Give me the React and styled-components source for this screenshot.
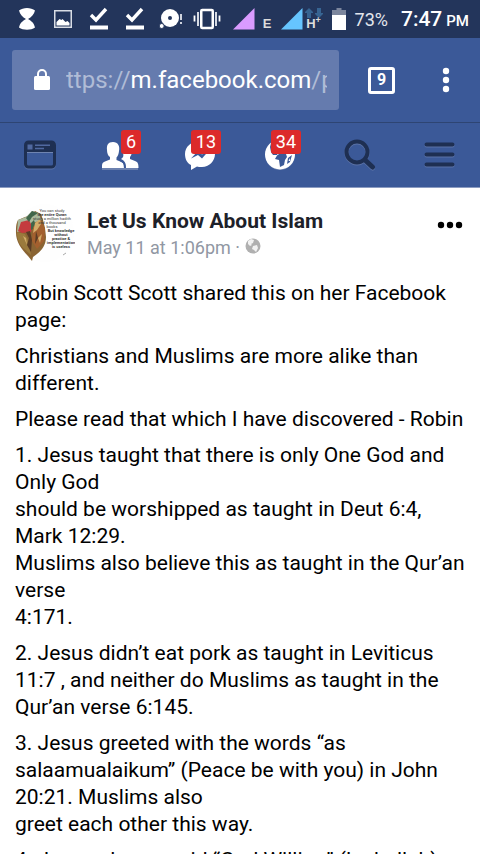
import React from "react";
import styled, { createGlobalStyle } from "styled-components";

const GlobalStyle = createGlobalStyle`
  * {
    box-sizing: border-box;
  }
  body {
    margin: 0;
    background: #fff;
    font-family: Roboto, "Liberation Sans", sans-serif;
  }
  button {
    border: none;
    padding: 0;
    background: none;
    font-family: inherit;
    cursor: pointer;
  }
  svg {
    display: block;
  }
`;

const Screen = styled.div`
  display: flex;
  flex-direction: column;
  height: 100vh;
`;

const StatusBar = styled.header`
  display: flex;
  justify-content: space-between;
  flex-shrink: 0;
  height: 38px;
  padding: 0 11px 0 9px;
  background: #23355b;
  color: #fff;
`;

const Notifications = styled.div`
  display: grid;
  grid-template-columns: repeat(6, 36px);
  align-items: center;
  justify-items: center;
`;

const SystemInfo = styled.div`
  display: flex;
  align-items: center;
  gap: 9px;
`;

const Signal = styled.div`
  display: flex;
  align-items: flex-end;
  gap: ${(props) => props.$gap};
  height: 22px;
`;

const NetworkType = styled.span`
  display: flex;
  flex-direction: column;
  align-items: center;
  font-family: "Liberation Sans", sans-serif;
  font-size: 13px;
  font-weight: 700;
  line-height: 12px;
  color: #dcdcdc;

  sup {
    font-size: 9px;
    line-height: 0;
  }
`;

const BatteryLevel = styled.span`
  font-size: 18px;
  color: #e3e6ec;
`;

const Clock = styled.time`
  display: flex;
  align-items: baseline;
  gap: 4px;
  margin-left: 4px;
  font-size: 21px;
  font-weight: 500;

  small {
    font-size: 15px;
  }
`;

const BrowserBar = styled.div`
  display: flex;
  align-items: center;
  flex-shrink: 0;
  height: 85px;
  padding: 0 12px;
  background: #3b5998;
  border-bottom: 1px solid #2e4573;
`;

const AddressBar = styled.button`
  display: flex;
  align-items: center;
  flex: 1;
  gap: 16px;
  min-width: 0;
  height: 60px;
  padding: 0 12px 0 22px;
  border-radius: 3px;
  background: #657bae;
  color: #fff;
`;

const Url = styled.span`
  flex: 1;
  min-width: 0;
  overflow: hidden;
  white-space: nowrap;
  text-align: left;
  font-size: 24px;
  line-height: 36px;
`;

const Dim = styled.span`
  color: #b0bcd6;
`;

const TabCount = styled.button`
  width: 27px;
  height: 27px;
  margin: 0 45px 0 29px;
  border: 3px solid #fff;
  border-radius: 3px;
  color: #fff;
  font-size: 16px;
  font-weight: 700;
  line-height: 20px;
`;

const MenuButton = styled.button`
  width: 12px;
  margin-right: 16px;
`;

const FacebookNav = styled.nav`
  display: grid;
  grid-template-columns: repeat(6, 1fr);
  flex-shrink: 0;
  height: 65px;
  background: #3b5998;
  border-bottom: 1px solid #8c9cc1;
`;

const NavLink = styled.a`
  display: flex;
  align-items: center;
  justify-content: center;
`;

const NavIcon = styled.span`
  position: relative;
  display: flex;
  align-items: center;
  justify-content: center;
  width: 42px;
  height: 32px;
`;

const Badge = styled.span`
  position: absolute;
  top: -9px;
  right: 0;
  padding: 0 5px;
  border-radius: 3px;
  background: #dc2a2a;
  color: #fff;
  font-size: 18px;
  line-height: 24px;
`;

const Feed = styled.main`
  flex: 1;
  min-height: 0;
  padding: 16px 15px;
  overflow-y: auto;
  scrollbar-width: none;
`;

const PostHeader = styled.div`
  display: flex;
  align-items: flex-start;
  gap: 12px;
`;

const PostMeta = styled.div`
  flex: 1;
  padding-top: 4px;
`;

const Author = styled.h1`
  margin: 0;
  font-size: 21px;
  font-weight: 700;
  line-height: 27px;
  color: #1d2129;
`;

const Timestamp = styled.div`
  display: flex;
  gap: 5px;
  font-size: 18px;
  line-height: 25px;
  color: #9197a3;

  svg {
    margin-top: 3px;
  }
`;

const MoreButton = styled.button`
  margin: 17px 2px 0 0;
`;

const PostBody = styled.div`
  margin-top: 16px;
  font-size: 21px;
  line-height: 27px;
  color: #000;

  p {
    margin: 0 0 9px;
  }
`;

const paragraphs = [
  ["Robin Scott Scott shared this on her Facebook page:"],
  ["Christians and Muslims are more alike than different."],
  ["Please read that which I have discovered - Robin"],
  [
    "1. Jesus taught that there is only One God and Only God",
    "should be worshipped as taught in Deut 6:4, Mark 12:29.",
    "Muslims also believe this as taught in the Qur’an verse",
    "4:171.",
  ],
  [
    "2. Jesus didn’t eat pork as taught in Leviticus 11:7 , and neither do Muslims as taught in the Qur’an verse 6:145.",
  ],
  [
    "3. Jesus greeted with the words “as salaamualaikum” (Peace be with you) in John 20:21. Muslims also",
    "greet each other this way.",
  ],
  ["4. Jesus always said “God Willing” (Inshallah)"],
];

const avatarLines = [
  ["You can study", 400],
  ["the entire Quran", 700],
  ["study a million hadith", 400],
  ["and a thousand", 400],
  ["books", 400],
  ["But knowledge", 700],
  ["without", 700],
  ["practice &", 700],
  ["implementation", 700],
  ["is useless", 700],
];

function DoneIcon() {
  return (
    <svg width="20" height="24" viewBox="0 0 20 24">
      <path d="M2 8l5 5L17 2" fill="none" stroke="#fff" strokeWidth="3.4" />
      <path d="M1 18.500h18v4H1z" fill="#fff" />
    </svg>
  );
}

function SignalIcon({ color }) {
  return (
    <svg width="22" height="22" viewBox="0 0 22 22">
      <path d="M0 21.500L21.500 0v21.500z" fill={color} />
    </svg>
  );
}

function StatusIcons() {
  return (
    <Notifications>
      <svg width="18" height="24" viewBox="0 0 18 24">
        <path d="M1 3.500C5 0 13 0 17 3.500c-1 4-3.500 6.500-7 8.500 3.500 2 6 4 7 8.500-4 3-12 3-16 0 1-4.500 3.500-6.500 7-8.500C4.500 10 2 7.500 1 3.500z" fill="#fff" />
      </svg>
      <svg width="18" height="18" viewBox="0 0 18 18">
        <path d="M.75.75h16.500v16.500H.75z" fill="none" stroke="#d9dde5" strokeWidth="1.500" />
        <path d="M2.500 15.500V12l3-3 2 1 1-1 3 3 2-1 2 2v2.500z" fill="#fff" />
      </svg>
      <DoneIcon />
      <DoneIcon />
      <svg width="24" height="20" viewBox="0 0 24 20">
        <circle cx="11" cy="9" r="9" fill="#fff" />
        <circle cx="11" cy="9" r="2" fill="#23355b" />
        <circle cx="2.700" cy="17" r="2.500" fill="#fff" stroke="#23355b" />
        <path d="M22 5v6M22 13v2" stroke="#cfd4de" strokeWidth="2" />
      </svg>
      <svg width="28" height="22" viewBox="0 0 28 22">
        <rect x="8.250" y="2" width="11.500" height="18" rx="1" fill="none" stroke="#fff" strokeWidth="2.500" />
        <path d="M5 4v14M23 4v14" stroke="#d5dae4" strokeWidth="2" />
        <path d="M1.500 7.500v6M26.500 7.500v6" stroke="#fff" strokeWidth="1.800" />
      </svg>
    </Notifications>
  );
}

function Avatar() {
  return (
    <svg width="60" height="60" viewBox="0 0 60 60" role="img" aria-label="Let Us Know About Islam">
      <circle cx="30" cy="29" r="29" fill="#fefefe" />
      <path d="M3 16l7-3 6-2 4-4 6 3 2 6 2 8 1 9c0 8-4 13-9 17l-4 3-1 4-4-5C6 45 1 37 1 29c0-6 0-9 2-13z" fill="#8a6433" />
      <path d="M3 16l8-3 6-6 6 2 4 7-9 3-6 7-10 2z" fill="#aab99c" />
      <path d="M6 18l8-2 3 6-1 6-9 1-4-2z" fill="#c43b3e" />
      <path d="M11 14l6-7 6 2-6 4-3 5zM16 19l3-3 2 7-5 3z" fill="#41664a" />
      <path d="M2 28l8 2 4 8 2 13-8-7c-5-5-6-11-6-16z" fill="#9a7a3d" />
      <path d="M18 23l8-7 4 9-1 12-7 8-5-8z" fill="#a3602f" />
      <path d="M15 27l2 9-1 12-4-7 2-7-3-6zM21 27l2 7-3 6z" fill="#5a3c25" />
      <path d="M20 19l5-4 1 5-4 6-4 3zM8 32l3 2 1 7zM23 34l4-4-2 9z" fill="#d3ac69" />
      <path d="M48 51l3-2" stroke="#aaa" />
      {avatarLines.map(([text, weight], i) => (
        <text key={text} x={i < 5 ? 37 : 46} y={8 + i * 4} fontSize="4" fontWeight={weight} textAnchor="middle" fill="#373737">
          {text}
        </text>
      ))}
    </svg>
  );
}

function NewsFeedIcon() {
  return (
    <svg width="34" height="30" viewBox="0 0 34 30">
      <rect x="2.500" y="3" width="29" height="25" rx="3" fill="none" stroke="#5b73a7" strokeWidth="3" />
      <rect x="2.500" y="2" width="29" height="25" rx="3" fill="#3b5998" stroke="#1e2f52" strokeWidth="3" />
      <path d="M2 2h30v10H2z" fill="#1e2f52" />
      <path d="M4.500 4.500h5v5h-5zM12 4.500h15v1.500H12zM12 7.700h9v1.500h-9z" fill="#5069a0" />
      <path d="M4 12.500h26" stroke="#6f84b1" />
    </svg>
  );
}

function FriendsIcon() {
  return (
    <svg width="38" height="30" viewBox="0 0 38 30">
      <path d="M1 28h36v2H1z" fill="#6c81af" />
      <path d="M22 4c6-3 10 1 9 7-.2 3-1 5-2 6v2l5 2c3 1 3.500 3 3.500 7H25c0-5-1-7-5-9 2-1 3-3 2-6z" fill="#fff" />
      <path d="M12 2c5 0 7 4 6 9-.3 3-1 5-2.500 6.500V20l5 2c2.500 1 2.500 3 2.500 6H1c0-4 0-5.500 3-6.500l5-2V17c-2-1-3-4-3-7C5.500 5 7 2 12 2z" fill="#fff" />
      <path d="M23.700 28c0-5-1-6-5.200-8" fill="none" stroke="#3b5998" strokeWidth="1.500" />
    </svg>
  );
}

function MessagesIcon() {
  return (
    <svg width="32" height="32" viewBox="0 0 32 32">
      <path d="M16 2c8 0 15 6 15 13s-6 13-13 13c-2 0-4 0-5-.5L7 31v-5C3 24 1 20 1 15 1 8 7 2 16 2z" fill="#fff" />
      <path d="M7 19.500l7-7.500 4 3.500 7-4-7 8-4-3.500z" fill="#3b5998" />
    </svg>
  );
}

function GlobeIcon() {
  return (
    <svg width="32" height="32" viewBox="0 0 32 32">
      <circle cx="16" cy="16.500" r="14.500" fill="#6c81af" />
      <circle cx="16" cy="15.500" r="15" fill="#fff" />
      <path d="M7 4l7 1 1 7-2 4H9l-2-3-1-5zM13 16.500l2-1.500h7l1 3-2 3-1 5-4 2-1-7-4-1zM18 4l8 3-3 7-5-3zM24 19l4-3-2 7-3 2z" fill="#3b5998" />
      <path d="M24.500 22l1.500-3v3z" fill="#fff" />
    </svg>
  );
}

function SearchIcon() {
  return (
    <svg width="32" height="32" viewBox="0 0 32 32">
      <g fill="none" stroke="#5b73a7" strokeWidth="4">
        <circle cx="13" cy="14" r="10.500" />
        <path d="M21 22l7.500 7" strokeWidth="5" strokeLinecap="round" />
      </g>
      <g fill="none" stroke="#1e2f52" strokeWidth="4">
        <circle cx="13" cy="13" r="10.500" />
        <path d="M21 21l7.500 7" strokeWidth="5" strokeLinecap="round" />
      </g>
    </svg>
  );
}

function MenuIcon() {
  return (
    <svg width="32" height="28" viewBox="0 0 32 28">
      <path d="M2.500 4.500h26M2.500 14.500h26M2.500 24.500h26" stroke="#5b73a7" strokeWidth="4" strokeLinecap="round" />
      <path d="M2.500 3.500h26M2.500 13.500h26M2.500 23.500h26" stroke="#1e2f52" strokeWidth="4" strokeLinecap="round" />
    </svg>
  );
}

const navItems = [
  { label: "News Feed", icon: <NewsFeedIcon /> },
  { label: "Friend Requests", icon: <FriendsIcon />, count: 6 },
  { label: "Messages", icon: <MessagesIcon />, count: 13 },
  { label: "Notifications", icon: <GlobeIcon />, count: 34 },
  { label: "Search", icon: <SearchIcon /> },
  { label: "Menu", icon: <MenuIcon /> },
];

export default function App() {
  return (
    <Screen>
      <GlobalStyle />
      <StatusBar>
        <StatusIcons />
        <SystemInfo>
          <Signal $gap="8px">
            <SignalIcon color="#d99bff" />
            <NetworkType>E</NetworkType>
          </Signal>
          <Signal $gap="2px">
            <SignalIcon color="#66c5ff" />
            <NetworkType>
              <svg width="18" height="10" viewBox="0 0 18 10">
                <path d="M0 4l4-4 4 4v1H6v5H2V5H0zM10 6l4 4 4-4V5h-2V0h-4v5h-2z" fill="#376492" />
              </svg>
              <span>
                H<sup>+</sup>
              </span>
            </NetworkType>
          </Signal>
          <svg width="14" height="22" viewBox="0 0 14 22">
            <path d="M4.500 0h5v2H14v6H0V2h4.500z" fill="#7c869d" />
            <path d="M0 7h14v15H0z" fill="#fff" />
          </svg>
          <BatteryLevel>73%</BatteryLevel>
          <Clock>
            <span>7:47</span>
            <small>PM</small>
          </Clock>
        </SystemInfo>
      </StatusBar>

      <BrowserBar>
        <AddressBar type="button" aria-label="Address">
          <svg width="16" height="22" viewBox="0 0 16 22">
            <path d="M4 9V5a4 4 0 0 1 8 0v4" fill="none" stroke="#fff" strokeWidth="2" />
            <rect y="7" width="16" height="14" rx="1.500" fill="#fff" />
          </svg>
          <Url>
            <Dim>ttps://</Dim>m.facebook.com<Dim>/p</Dim>
          </Url>
        </AddressBar>
        <TabCount type="button" aria-label="9 open tabs">9</TabCount>
        <MenuButton type="button" aria-label="Browser menu">
          <svg width="12" height="26" viewBox="0 0 12 26">
            <circle cx="6" cy="4" r="3.200" fill="#fff" />
            <circle cx="6" cy="13" r="3.200" fill="#fff" />
            <circle cx="6" cy="22" r="3.200" fill="#fff" />
          </svg>
        </MenuButton>
      </BrowserBar>

      <FacebookNav>
        {navItems.map((item) => (
          <NavLink key={item.label} href="#" aria-label={item.label}>
            <NavIcon>
              {item.icon}
              {item.count && <Badge>{item.count}</Badge>}
            </NavIcon>
          </NavLink>
        ))}
      </FacebookNav>

      <Feed>
        <article>
          <PostHeader>
            <Avatar />
            <PostMeta>
              <Author>Let Us Know About Islam</Author>
              <Timestamp>
                <span>May 11 at 1:06pm ·</span>
                <svg width="16" height="16" viewBox="0 0 16 16">
                  <circle cx="8" cy="8" r="7.500" fill="#b0b0b0" />
                  <path d="M3 3l3-2 3 1-1 3-2 1 1 1-2 1-2-2zM8 8l4-1 1 3-2 4-2-2-2-1z" fill="#f2f2f2" />
                </svg>
              </Timestamp>
            </PostMeta>
            <MoreButton type="button" aria-label="More options">
              <svg width="26" height="8" viewBox="0 0 26 8">
                <circle cx="4" cy="4" r="3.200" />
                <circle cx="13" cy="4" r="3.200" />
                <circle cx="22" cy="4" r="3.200" />
              </svg>
            </MoreButton>
          </PostHeader>
          <PostBody>
            {paragraphs.map((lines) => (
              <p key={lines[0]}>
                {lines.map((line, i) => (
                  <React.Fragment key={line}>
                    {i > 0 && <br />}
                    {line}
                  </React.Fragment>
                ))}
              </p>
            ))}
          </PostBody>
        </article>
      </Feed>
    </Screen>
  );
}
